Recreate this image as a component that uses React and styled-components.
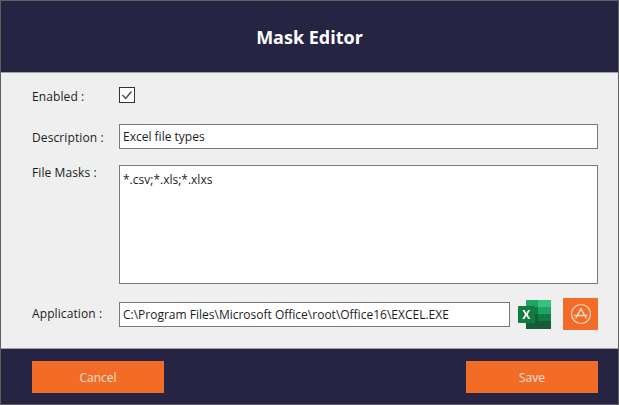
import React from "react";
import styled, { createGlobalStyle } from "styled-components";

const Global = createGlobalStyle`
  html, body { margin: 0; padding: 0; background: #5f5f5f; }
`;

const Dialog = styled.div`
  box-sizing: border-box;
  width: 619px;
  height: 405px;
  border: 1px solid #5f5f5f;
  border-bottom-width: 1px;
  display: flex;
  flex-direction: column;
  font-family: "Open Sans", "Liberation Sans", sans-serif;
  font-size: 12px;
  color: #1c1c1c;
`;

const Header = styled.header`
  height: 71px;
  background: #252543;
  border-bottom: 1px solid #a0a0a8;
  display: flex;
  align-items: center;
  justify-content: center;
  color: #fff;
  font-size: 18px;
  font-weight: 700;
  font-family: "Open Sans", sans-serif;
`;

const Body = styled.main`
  flex: 1;
  background: #efefef;
  padding: 14px 20px 0 31px;
  display: flex;
  flex-direction: column;
`;

const Row = styled.div`
  display: grid;
  grid-template-columns: 87px 1fr;
  align-items: ${(p) => (p.$top ? "start" : "center")};
  margin-bottom: ${(p) => p.$gap || 0}px;
`;

const Label = styled.label`
  font-size: 12px;
  line-height: 16px;
  padding-top: ${(p) => p.$offset || 0}px;
  letter-spacing: 0.1px;
`;

const Check = styled.span`
  box-sizing: border-box;
  width: 16px;
  height: 16px;
  border: 1px solid #333;
  background: #fff;
  display: flex;
  align-items: center;
  justify-content: center;
  margin-top: -2px;
`;

const Field = styled.input`
  box-sizing: border-box;
  width: 100%;
  height: ${(p) => p.$h || 25}px;
  border: 1px solid #7a7a7a;
  background: #fff;
  outline: none;
  padding: 0 3px;
  font: 12px "Open Sans", sans-serif;
  color: #1c1c1c;
`;

const Area = styled.textarea`
  box-sizing: border-box;
  display: block;
  width: 100%;
  height: 119px;
  border: 1px solid #7a7a7a;
  background: #fff;
  outline: none;
  resize: none;
  padding: 5px 3px;
  overflow: hidden;
  font: 12px "Open Sans", sans-serif;
  color: #1c1c1c;
`;

const AppControls = styled.div`
  display: flex;
  align-items: center;
`;

const AppField = styled(Field)`
  width: 391px;
  flex: none;
`;

const IconSlot = styled.span`
  width: 33px;
  height: 30px;
  margin: 0 12px 0 8px;
  flex: none;
  display: flex;
`;

const OrangeIcon = styled.button`
  width: 35px;
  height: 32px;
  padding: 0;
  border: none;
  flex: none;
  background: #f26b27;
  display: flex;
  align-items: center;
  justify-content: center;
`;

const Footer = styled.footer`
  height: 56px;
  background: #252543;
  border-top: 1px solid #a0a0a8;
  padding: 12px 20px 0 31px;
  box-sizing: border-box;
  display: flex;
  justify-content: space-between;
  align-items: flex-start;
`;

const Action = styled.button`
  width: 132px;
  height: 32px;
  border: none;
  background: #f26b27;
  color: #fbe3d4;
  font: 12px "Open Sans", sans-serif;
  padding: 0;
`;

function ExcelIcon() {
  return (
    <svg width="33" height="30" viewBox="0 0 33 30">
      <rect x="8" y="1" width="25" height="29" rx="1" fill="#21a366" />
      <rect x="20" y="1" width="13" height="8" fill="#33c481" />
      <rect x="8" y="8" width="12" height="8" fill="#107c41" />
      <rect x="20" y="8" width="13" height="8" fill="#21a366" />
      <rect x="8" y="15" width="12" height="8" fill="#185c37" />
      <rect x="20" y="15" width="13" height="8" fill="#107c41" />
      <rect x="8" y="22" width="25" height="8" fill="#185c37" />
      <rect x="0" y="7" width="17" height="17" rx="1" fill="#107c41" />
      <path d="M4.5 11 L7 15.5 L4.3 20 H6.4 L8.3 16.8 L10.2 20 H12.3 L9.6 15.5 L12.1 11 H10.1 L8.3 14.2 L6.5 11 Z" fill="#fff" />
    </svg>
  );
}

function StoreIcon() {
  return (
    <svg width="22" height="22" viewBox="0 0 22 22" fill="none" stroke="#fbd9c4" strokeLinecap="round">
      <circle cx="11" cy="11" r="9.5" strokeWidth="1.2" />
      <path d="M11 5.5 L6 15 M11 5.5 L16 15 M5 12.5 H17" strokeWidth="1.6" />
    </svg>
  );
}

export default function App() {
  return (
    <>
      <Global />
      <Dialog>
        <Header>Mask Editor</Header>
        <Body>
          <Row $gap={19}>
            <Label $offset={2}>Enabled :</Label>
            <Check>
              <svg width="12" height="12" viewBox="0 0 12 12" fill="none" stroke="#444" strokeWidth="1.3">
                <path d="M1.5 6 L4.7 9.5 L10.5 2.5" />
              </svg>
            </Check>
          </Row>
          <Row $gap={16}>
            <Label $offset={2}>Description :</Label>
            <Field defaultValue="Excel file types" />
          </Row>
          <Row $top $gap={14}>
            <Label>File Masks :</Label>
            <Area defaultValue="*.csv;*.xls;*.xlxs" />
          </Row>
          <Row>
            <Label>Application :</Label>
            <AppControls>
              <AppField defaultValue="C:\Program Files\Microsoft Office\root\Office16\EXCEL.EXE" />
              <IconSlot><ExcelIcon /></IconSlot>
              <OrangeIcon aria-label="Browse"><StoreIcon /></OrangeIcon>
            </AppControls>
          </Row>
        </Body>
        <Footer>
          <Action>Cancel</Action>
          <Action>Save</Action>
        </Footer>
      </Dialog>
    </>
  );
}
